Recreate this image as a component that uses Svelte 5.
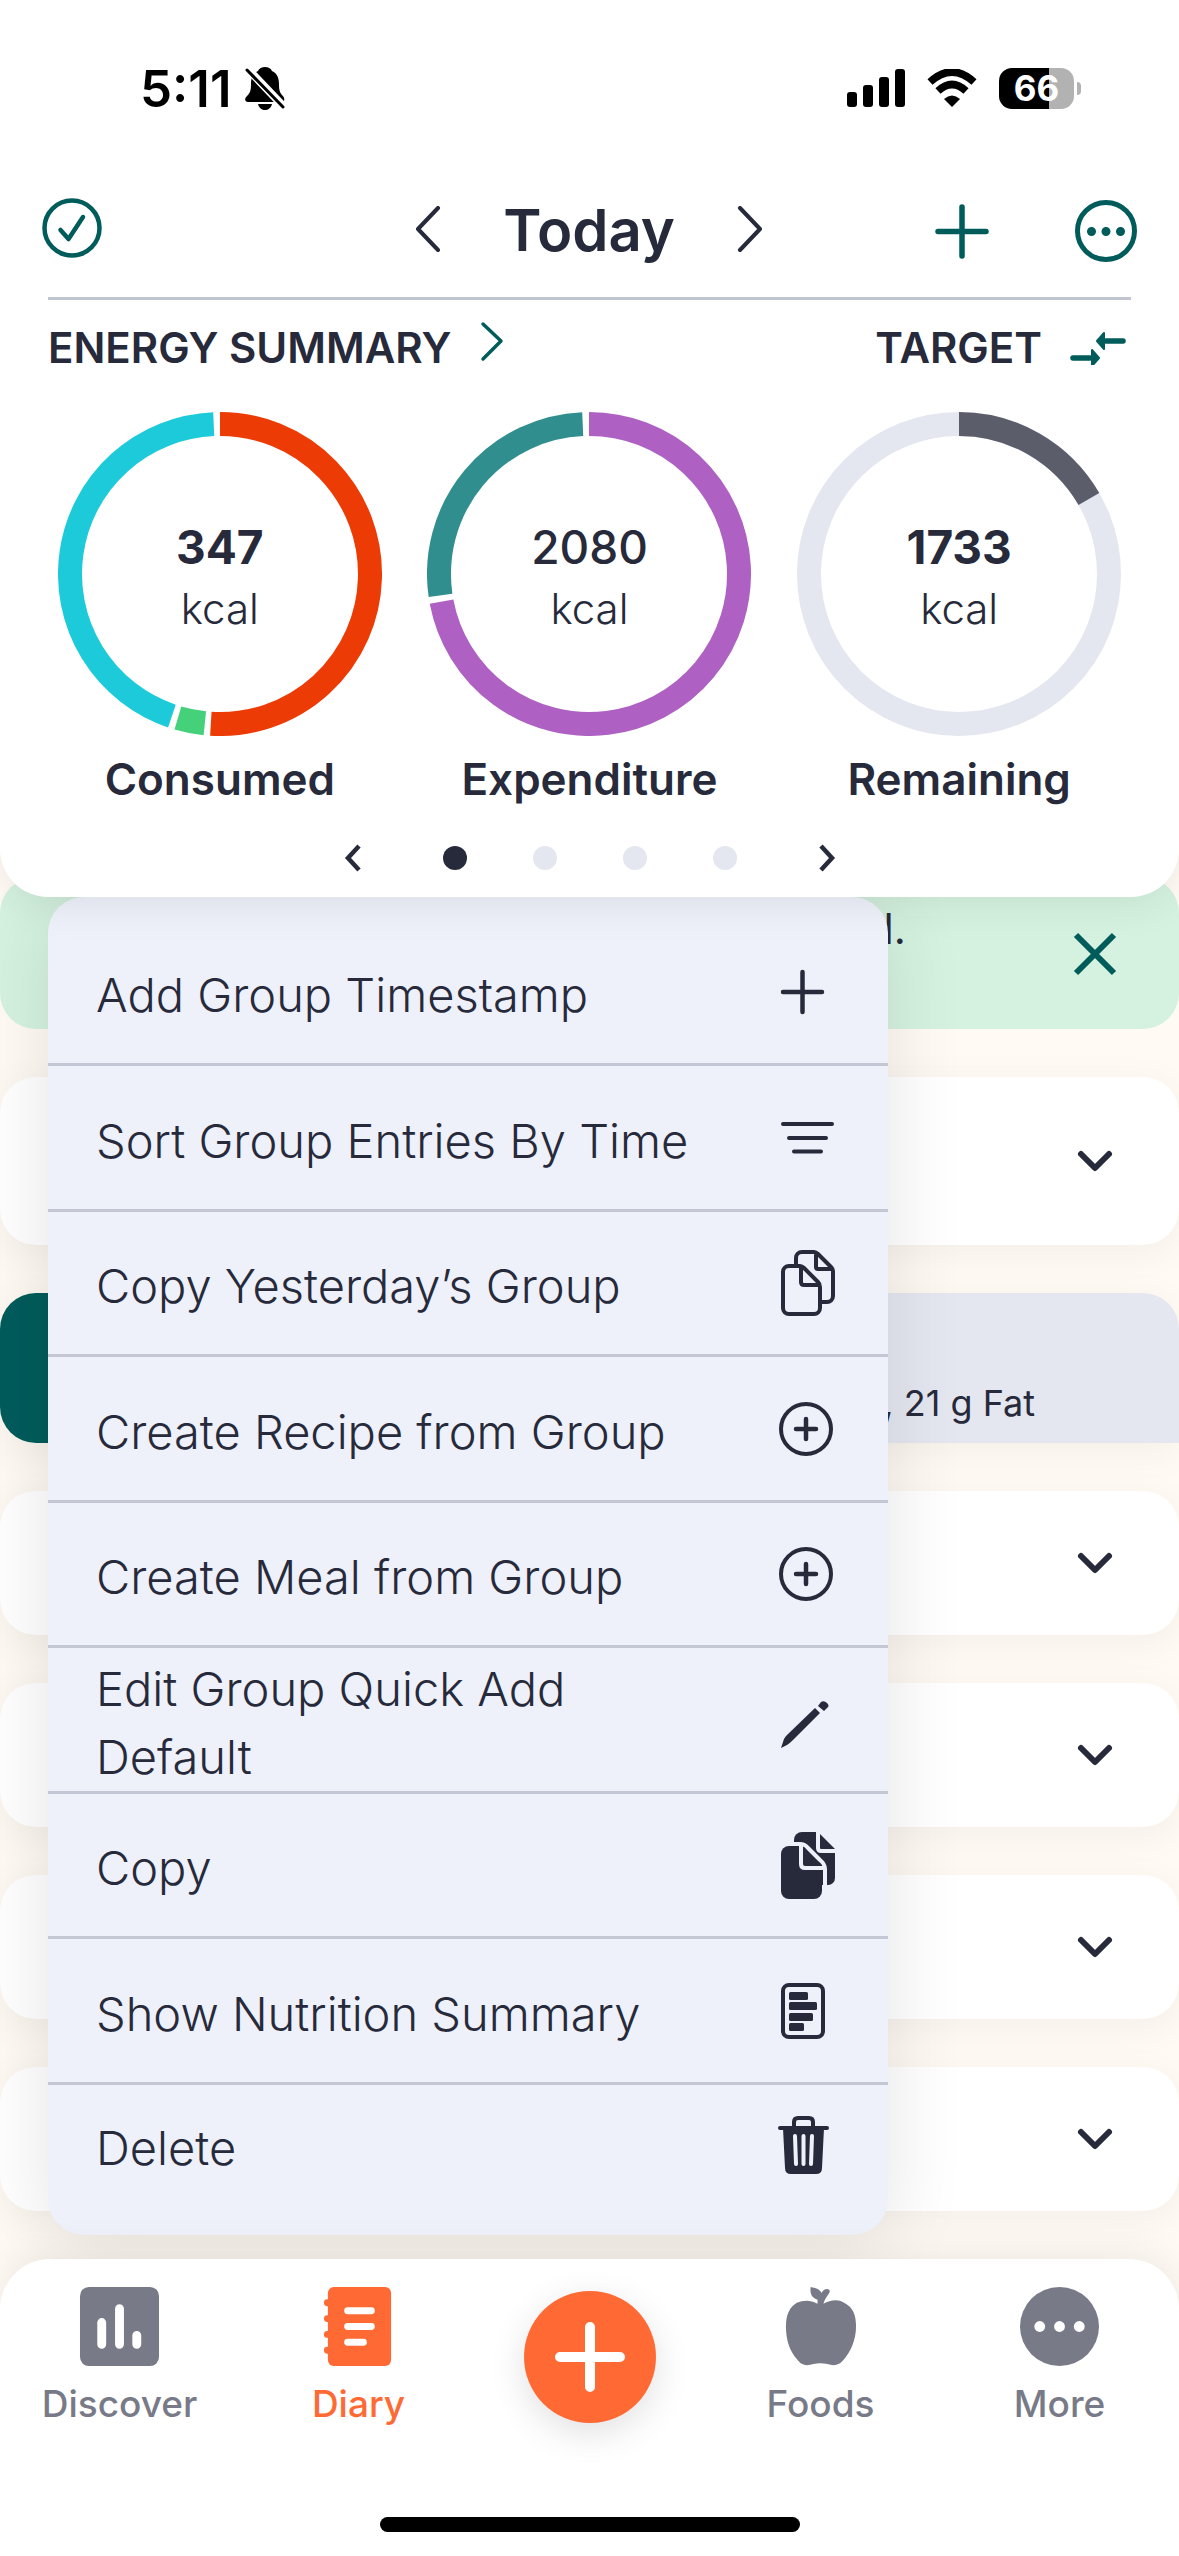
<script>
  const rings = [
    {
      label: 'Consumed', value: '347', strong: true,
      arcs: [
        { from: 0, to: 183.5, color: '#ec3b04' },
        { from: 185.8, to: 196.3, color: '#44d17a' },
        { from: 198.7, to: 357.6, color: '#1dcad9' }
      ]
    },
    {
      label: 'Expenditure', value: '2080', strong: false,
      arcs: [
        { from: 0, to: 259.4, color: '#ae60c3' },
        { from: 261.8, to: 357.6, color: '#318e8e' }
      ]
    },
    {
      label: 'Remaining', value: '1733', strong: true, track: true,
      arcs: [{ from: 0, to: 60, color: '#5c5d6a' }]
    }
  ];

  const actions = [
    { label: 'Add Group Timestamp', icon: 'plus' },
    { label: 'Sort Group Entries By Time', icon: 'sort' },
    { label: 'Copy Yesterday’s Group', icon: 'pages' },
    { label: 'Create Recipe from Group', icon: 'circle-plus' },
    { label: 'Create Meal from Group', icon: 'circle-plus' },
    { label: 'Edit Group Quick Add Default', icon: 'pencil' },
    { label: 'Copy', icon: 'pages-solid' },
    { label: 'Show Nutrition Summary', icon: 'report' },
    { label: 'Delete', icon: 'trash' }
  ];

  let page = $state(0);

  function arcPath(from, to) {
    const point = (deg) => {
      const a = ((deg - 90) * Math.PI) / 180;
      return `${(162 + 150 * Math.cos(a)).toFixed(2)} ${(162 + 150 * Math.sin(a)).toFixed(2)}`;
    };
    return `M${point(from)}A150 150 0 ${to - from > 180 ? 1 : 0} 1 ${point(to)}`;
  }
</script>

{#snippet down()}
  <svg class="line" width="48" height="48" viewBox="0 0 48 48" stroke-width="6"><path d="M10 17 24 31 38 17" /></svg>
{/snippet}

<div class="screen">
  <header class="top">
    <div class="status">
      <div class="clock">
        <span>5:11</span>
        <svg width="40" height="44" viewBox="0 0 40 44">
          <path d="M20 1c-3 0-6 1.500-7 4-5 2-7 7-7 13 0 7-1 9-4 12-3 3-2 6 1 6h33c4 0 4-3 2-6-3-3-4-5-4-12 0-6-2-11-7-13-1-2.500-4-4-7-4Z" />
          <path d="M13 38h14c-1 4-4 6-7 6s-6-2-7-6Z" />
          <path d="M0 0 40 42" stroke="#fff" stroke-width="8" />
          <path d="M2 4 38 41" stroke="#000" stroke-width="3" stroke-linecap="round" />
        </svg>
      </div>
      <div class="signals">
        <svg width="58" height="38" viewBox="0 0 58 38">
          <rect y="23" width="10" height="15" rx="3" /><rect x="16" y="16" width="10" height="22" rx="3" />
          <rect x="32" y="8" width="10" height="30" rx="3" /><rect x="48" width="10" height="38" rx="3" />
        </svg>
        <svg width="50" height="38" viewBox="0 0 50 38">
          <path d="M3 13Q25-7 47 13M11 22Q25 9 39 22" fill="none" stroke="#000" stroke-width="7.500" />
          <path d="M17 30Q25 23 33 30L25 38Z" />
        </svg>
        <div class="battery"><span>66</span></div>
      </div>
    </div>

    <div class="toolbar">
      <button class="start" aria-label="Mark day complete">
        <svg class="line teal" width="64" height="64" viewBox="0 0 64 64" stroke-width="4.500">
          <circle cx="32" cy="30" r="27.500" /><path d="M20.500 32 28.500 41 43 19" />
        </svg>
      </button>
      <div class="day">
        <button aria-label="Previous day"><svg class="line" width="26" height="48" viewBox="0 0 26 48" stroke-width="4"><path d="M23 2 3 23 23 44" /></svg></button>
        <h1>Today</h1>
        <button aria-label="Next day"><svg class="line" width="26" height="48" viewBox="0 0 26 48" stroke-width="4"><path d="M3 2 23 23 3 44" /></svg></button>
      </div>
      <div class="tools">
        <button aria-label="Add"><svg class="line teal" width="64" height="64" viewBox="0 0 64 64" stroke-width="5.500"><path d="M32 9V58M8 33.500H56" /></svg></button>
        <button aria-label="More options">
          <svg class="line teal" width="64" height="64" viewBox="0 0 64 64" stroke-width="5"><circle cx="32" cy="33" r="28.500" />
            <g stroke-width="9"><path d="M17.500 33.500h.01M32 33.500h.01M46.500 33.500h.01" /></g></svg>
        </button>
      </div>
    </div>

    <div class="summary">
      <button class="caps">ENERGY SUMMARY
        <svg class="line teal" width="24" height="52" viewBox="0 0 24 52" stroke-width="3.500"><path d="M3 3 21 20 3 38" /></svg>
      </button>
      <button class="caps">TARGET
        <svg class="line teal" width="56" height="36" viewBox="0 0 56 36" stroke-width="5.500">
          <path d="M36 12H53M3 29H20" /><path d="M34 4 27 12 34 20ZM22 21 29 29 22 37Z" fill="#005c5b" stroke-width="2" />
        </svg>
      </button>
    </div>

    <div class="rings">
      {#each rings as ring}
        <figure>
          <div class="dial">
            <svg width="324" height="324" viewBox="0 0 324 324" fill="none" stroke-width="24">
              {#if ring.track}<circle cx="162" cy="162" r="150" stroke="#e4e7f0" />{/if}
              {#each ring.arcs as arc}<path d={arcPath(arc.from, arc.to)} stroke={arc.color} />{/each}
            </svg>
            <p><b class:medium={!ring.strong}>{ring.value}</b><span>kcal</span></p>
          </div>
          <figcaption>{ring.label}</figcaption>
        </figure>
      {/each}
    </div>

    <div class="pager">
      <button aria-label="Previous page" onclick={() => (page = Math.max(0, page - 1))}>
        <svg class="line sharp" width="18" height="28" viewBox="0 0 18 28" stroke-width="4.500"><path d="M15 2 4 14 15 26" /></svg>
      </button>
      <div class="dots">
        {#each [0, 1, 2, 3] as n}
          <button class="dot" class:on={page === n} aria-label={`Page ${n + 1}`} onclick={() => (page = n)}></button>
        {/each}
      </div>
      <button aria-label="Next page" onclick={() => (page = Math.min(3, page + 1))}>
        <svg class="line sharp" width="18" height="28" viewBox="0 0 18 28" stroke-width="4.500"><path d="M3 2 14 14 3 26" /></svg>
      </button>
    </div>
  </header>

  <main>
    <section class="notice">
      <p>d.</p>
      <button aria-label="Dismiss"><svg class="line teal sharp" width="48" height="48" viewBox="0 0 48 48" stroke-width="6"><path d="M5 5 43 43M43 5 5 43" /></svg></button>
    </section>
    <section class="card tall"><button aria-label="Expand">{@render down()}</button></section>
    <section class="group"><p>s, 21 g Fat</p></section>
    {#each [1, 2, 3, 4] as n}
      <section class="card"><button aria-label={`Expand group ${n}`}>{@render down()}</button></section>
    {/each}

    <ul class="menu">
      {#each actions as action}
        <li>
          <button>
            <span>{action.label}</span>
            <svg class="line" width="60" height="72" viewBox="0 0 60 72" stroke-width="4">
              {#if action.icon === 'plus'}
                <path d="M26.500 16V56M7 36H46" stroke-width="4.500" />
              {:else if action.icon === 'sort'}
                <path d="M7 22H56M13 36H50M18 49.500H45" />
              {:else if action.icon === 'pages'}
                <path d="M20 17V11a6 6 0 0 1 6-6H38q2 0 4 2L55 20q2 2 2 4V49a6 6 0 0 1-6 6H45M40 6V20q0 2 2 2H56" />
                <path d="M24 19H13a6 6 0 0 0-6 6V61a6 6 0 0 0 6 6H38a6 6 0 0 0 6-6V40q0-3-2-5L28 21q-2-2-4-2ZM25 20V35q0 3 3 3H43" />
              {:else if action.icon === 'circle-plus'}
                <circle cx="30" cy="36" r="25" /><path d="M30 26V46M20 36H40" stroke-width="4.500" />
              {:else if action.icon === 'pencil'}
                <g class="solid"><path d="M5 64 8 55Q9 53 11 51L39 24 44 29 17 56Q14 59 11 61Z" /><path d="M42 22 45 18Q48 16 51 19T51 24L48 27Z" /></g>
              {:else if action.icon === 'pages-solid'}
                <path class="solid" d="M18 16V11a8 8 0 0 1 8-8H42L59 20V49a7 7 0 0 1-7 7H30Z" />
                <path class="cut" d="M42 0V19q0 3 3 3H60M18 15H24q5 0 8 4L44 31q5 4 5 9V58" />
                <path class="solid" d="M13 17H26L46 37V62a8 8 0 0 1-8 8H13a8 8 0 0 1-8-8V25a8 8 0 0 1 8-8Z" />
                <path class="cut" d="M25 17V35q0 4 4 4H47" />
              {:else if action.icon === 'report'}
                <rect x="7" y="10" width="40" height="52" rx="6" />
                <g class="solid"><rect x="13" y="17" width="19" height="8" rx="1.500" /><rect x="13" y="27" width="28" height="8" rx="1.500" /><rect x="13" y="38" width="24" height="8" rx="1.500" /><rect x="13" y="48" width="15" height="8" rx="1.500" /></g>
              {:else}
                <path d="M18 18V13q0-4 4-4H33q4 0 4 4V18M4 19H51" />
                <path class="solid" d="M7 19H48L46 59q0 6-6 6H15q-6 0-6-6Z" />
                <path class="cut" d="M19 27 20 55M27.500 27V55M36 27 35 55" />
              {/if}
            </svg>
          </button>
        </li>
      {/each}
    </ul>
  </main>

  <nav>
    <div class="tabs">
      <a href="#discover">
        <svg width="79" height="79" viewBox="0 0 80 80"><rect width="80" height="80" rx="9" fill="currentColor" /><path d="M22 36V58M40 22V58M57.500 49V58" stroke="#fff" stroke-width="9" stroke-linecap="round" /></svg>
        Discover
      </a>
      <a href="#diary" class="active" aria-current="page">
        <svg width="79" height="79" viewBox="0 0 80 80">
          <rect x="9" width="64" height="80" rx="6" fill="currentColor" />
          <path d="M8.500 16h3M8.500 32h3M8.500 48h3M8.500 64h3" stroke="currentColor" stroke-width="7" stroke-linecap="round" />
          <path d="M29 24H53M29 40H53M29 56H45" stroke="#fff" stroke-width="7" stroke-linecap="round" />
        </svg>
        Diary
      </a>
      <button class="fab" aria-label="Add entry"><svg width="80" height="80" viewBox="0 0 80 80"><path d="M40 10V70M10 40H70" stroke="#fff" stroke-width="10" stroke-linecap="round" /></svg></button>
      <a href="#foods">
        <svg width="79" height="79" viewBox="0 0 80 80"><path fill="currentColor" d="M37 17V13C32 11 29 8 30 0 35 1 39 2 41 6 43 2 47 1 49 3 51 6 45 9 43 17 50 13 58 12 64 16 73 21 76 28 76 40 76 54 70 66 64 73 59 80 53 80 47 78 42 77 37 77 33 78 26 80 21 80 16 73 9 65 5 54 5 40 5 28 9 20 16 16 23 13 30 13 37 17Z" /></svg>
        Foods
      </a>
      <a href="#more">
        <svg width="79" height="79" viewBox="0 0 80 80"><circle cx="40" cy="40" r="40" fill="currentColor" /><g fill="#fff"><circle cx="20" cy="40" r="5.500" /><circle cx="40" cy="40" r="5.500" /><circle cx="60" cy="40" r="5.500" /></g></svg>
        More
      </a>
    </div>
    <div class="home"></div>
  </nav>
</div>

<style>
  :global(body) { margin: 0; }
  .screen {
    display: flex;
    flex-direction: column;
    min-height: 100vh;
    overflow: hidden;
    background: #fffaf3;
    color: #272a3b;
    font-family: Inter, "Liberation Sans", sans-serif;
  }
  button {
    display: flex;
    align-items: center;
    padding: 0;
    border: 0;
    background: none;
    color: inherit;
    font: inherit;
    text-align: left;
  }
  svg { display: block; flex: none; }
  p, h1, ul, figure { margin: 0; padding: 0; }
  .line { fill: none; stroke: #272a3b; stroke-linecap: round; stroke-linejoin: round; }
  .teal { stroke: #005c5b; }
  .sharp { stroke-linecap: butt; stroke-linejoin: miter; }
  .solid { fill: #272a3b; stroke: none; }
  .cut { stroke: #eef1fa; }

  .top {
    position: relative;
    z-index: 2;
    padding-bottom: 11px;
    border-radius: 0 0 48px 48px;
    background: #fff;
    box-shadow: 0 8px 40px rgba(0, 0, 0, 0.08);
  }
  .status {
    display: flex;
    align-items: center;
    justify-content: space-between;
    height: 72px;
    padding: 52px 98px 52px 140px;
    color: #000;
  }
  .clock { display: flex; align-items: center; gap: 14px; font-size: 51px; font-weight: 600; }
  .signals { display: flex; align-items: center; gap: 22px; }
  .battery {
    position: relative;
    width: 75px;
    height: 41px;
    margin-right: 7px;
    border-radius: 13px;
    background: linear-gradient(90deg, #000 67%, #b2b2b2 67%);
    color: #fff;
    font-size: 35px;
    font-weight: 700;
    line-height: 41px;
    text-align: center;
  }
  .battery::after {
    content: "";
    position: absolute;
    right: -7px;
    top: 14px;
    width: 4px;
    height: 13px;
    border-radius: 0 4px 4px 0;
    background: #b2b2b2;
  }
  .toolbar {
    display: grid;
    grid-template-columns: 1fr auto 1fr;
    align-items: center;
    height: 108px;
    padding: 0 41px 13px 40px;
  }
  .day { display: flex; align-items: center; gap: 62px; }
  h1 { font-size: 58px; font-weight: 600; line-height: 72px; }
  .tools { display: flex; gap: 80px; justify-content: flex-end; }
  .summary {
    display: flex;
    justify-content: space-between;
    height: 94px;
    margin: 0 48px;
    padding-bottom: 2px;
    border-top: 3px solid #c1c5d1;
  }
  .caps { gap: 28px; font-size: 42px; font-weight: 600; }
  .caps + .caps { padding-right: 5px; }
  .rings { display: grid; grid-template-columns: repeat(3, 1fr); padding: 16px 35px 0; }
  figure { display: flex; flex-direction: column; align-items: center; gap: 13px; }
  .dial { display: grid; place-items: center; }
  .dial > * { grid-area: 1 / 1; }
  .dial p { padding-top: 18px; text-align: center; line-height: 64px; }
  .dial b { display: block; font-size: 46px; font-weight: 700; line-height: 60px; }
  .dial b.medium { font-weight: 500; }
  .dial span { font-size: 42px; font-weight: 300; }
  figcaption { font-size: 44px; font-weight: 600; line-height: 60px; }
  .pager { display: flex; align-items: center; justify-content: center; gap: 81px; height: 56px; padding-top: 21px; }
  .dots { display: flex; gap: 66px; }
  .dot { width: 24px; height: 24px; border-radius: 50%; background: #e4e7f0; }
  .dot.on { background: #272a3b; }

  main { position: relative; display: flex; flex: 1; flex-direction: column; gap: 48px; padding-bottom: 48px; }
  section { display: flex; align-items: center; justify-content: flex-end; border-radius: 36px; }
  .notice {
    justify-content: space-between;
    min-height: 114px;
    margin-top: -20px;
    padding: 20px 60px 18px 868px;
    background: #d5f2e0;
    font-size: 42px;
    font-weight: 400;
  }
  .notice p { padding-bottom: 52px; }
  .card { min-height: 144px; padding-right: 60px; background: #fff; box-shadow: 0 8px 40px rgba(0, 0, 0, 0.05); }
  .card.tall { min-height: 168px; }
  .group {
    align-items: flex-end;
    min-height: 150px;
    padding-right: 144px;
    border-radius: 36px 36px 0 36px;
    background: linear-gradient(90deg, #005c5b 10%, #e4e7f0 10%);
    box-shadow: 0 8px 40px rgba(0, 0, 0, 0.05);
    box-sizing: border-box;
    font-size: 36px;
    line-height: 44px;
  }
  .group p { padding-bottom: 18px; }

  .menu {
    position: absolute;
    top: 0;
    left: 48px;
    width: 840px;
    border-radius: 36px;
    background: #eef1fa;
    box-shadow: 0 10px 80px rgba(0, 0, 0, 0.11);
    list-style: none;
    font-size: 47px;
    font-weight: 300;
    line-height: 68px;
  }
  .menu li { border-bottom: 3px solid #c3c6d3; }
  .menu button { width: 100%; min-height: 142px; padding: 0 52px 0 48px; gap: 64px; }
  .menu li:nth-child(even) button { min-height: 143px; }
  .menu span { flex: 1; padding-top: 6px; }
  .menu li:first-child { padding-top: 24px; }
  .menu li:last-child { padding-bottom: 30px; border: 0; }
  .menu li:last-child button { min-height: 120px; }

  nav {
    position: relative;
    z-index: 2;
    padding: 28px 0 24px;
    border-radius: 50px 50px 0 0;
    background: #fff;
    box-shadow: 0 -4px 40px rgba(0, 0, 0, 0.08);
  }
  .tabs { display: grid; grid-template-columns: 239fr 239fr 223fr 239fr 239fr; justify-items: center; height: 230px; }
  a {
    display: flex;
    flex-direction: column;
    align-items: center;
    gap: 14px;
    color: #787a87;
    font-size: 37px;
    font-weight: 500;
    line-height: 48px;
    text-decoration: none;
  }
  .active { color: #ff6933; }
  .fab {
    justify-content: center;
    width: 132px;
    height: 132px;
    margin-top: 4px;
    border-radius: 50%;
    background: #ff6933;
    box-shadow: 0 10px 36px rgba(0, 0, 0, 0.12);
  }
  .home { width: 420px; height: 15px; margin: 0 auto; border-radius: 8px; background: #000; }
</style>
